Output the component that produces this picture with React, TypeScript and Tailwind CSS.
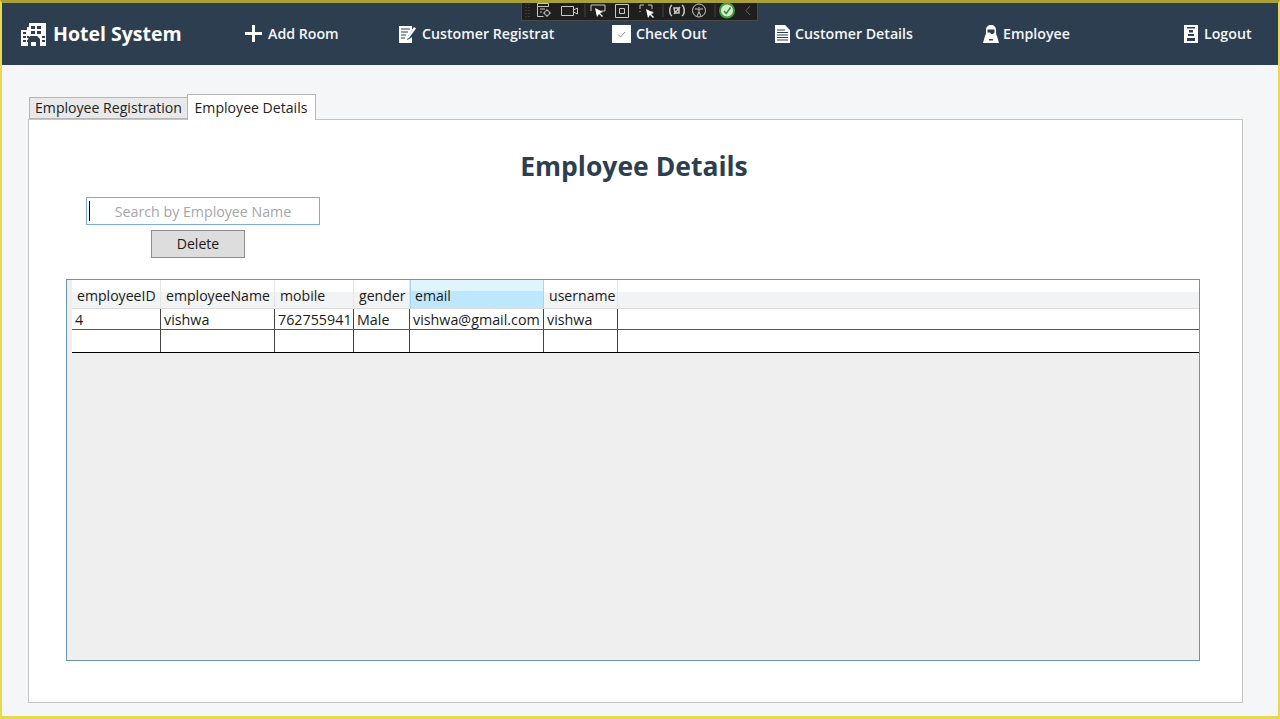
const columns = [
  { name: 'employeeID', value: '4', width: 'w-[89px]', pad: 'pl-[5px]' },
  { name: 'employeeName', value: 'vishwa', width: 'w-[114px]', pad: 'pl-[5px]' },
  { name: 'mobile', value: '762755941', width: 'w-[79px]', pad: 'pl-[5px]' },
  { name: 'gender', value: 'Male', width: 'w-[56px]', pad: 'pl-[5px]' },
  { name: 'email', value: 'vishwa@gmail.com', width: 'w-[134px]', pad: 'pl-[4px]' },
  { name: 'username', value: 'vishwa', width: 'w-[74px]', pad: 'pl-[5px]' },
];

function HotelIcon() {
  return (
    <svg width="25" height="23" viewBox="0 0 25 23" fill="#fff">
      <path d="M0 7h6V4h2V0h17v23H0z" />
      <g fill="#2d3e50">
        <path d="M2 9h3v2H2zM2 13h3v2H2zM2 17h3v2H2zM6 13h2v2H6zM6 17h2v2H6z" />
        <path d="M10 3h4v3h-4zM16 3h4v3h-4zM10 8h4v3h-4zM16 8h4v3h-4zM21 13h3v2h-3zM21 17h3v2h-3z" />
        <path d="M9 13h7l3 3v7H7v-7z" />
      </g>
      <path d="M10 19h5v4h-5z" fill="#fff" />
    </svg>
  );
}

function PlusIcon() {
  return (
    <svg width="17" height="17" viewBox="0 0 17 17" fill="#fff">
      <path d="M7 0h3v7h7v3h-7v7H7v-7H0V7h7z" />
    </svg>
  );
}

function FormIcon() {
  return (
    <svg width="17" height="18" viewBox="0 0 17 18">
      <path d="M0 1h13v4l-4 6-1 4 4-2 1-1v6H0z" fill="#fff" />
      <path d="M2 4h9M2 7h7M2 10h5M2 13h4" stroke="#2d3e50" strokeWidth="1.200" />
      <path d="M15 2l2 1.500L10 13l-2 1 .3-2.300z" fill="#fff" />
    </svg>
  );
}

function CheckIcon() {
  return (
    <svg width="19" height="18" viewBox="0 0 19 18">
      <path d="M0 0h19v18H0z" fill="#fff" />
      <path d="M6 9.500l2.500 2.500L13 7" fill="none" stroke="#8a8f96" strokeWidth="1" />
    </svg>
  );
}

function DocIcon() {
  return (
    <svg width="15" height="18" viewBox="0 0 15 18">
      <path d="M0 0h10l5 5v13H0z" fill="#fff" />
      <path d="M2 5h8M2 7.500h11M2 10h11M2 12.500h11M2 15h11" stroke="#2d3e50" strokeWidth="1" />
    </svg>
  );
}

function PersonIcon() {
  return (
    <svg width="16" height="18" viewBox="0 0 16 18">
      <path d="M8 0c3 0 5 2 5 5 0 3 0 5 1 6l2 7H0l2-7c1-1 1-3 1-6 0-3 2-5 5-5z" fill="#fff" />
      <path d="M4.500 4.500h7v3l-1.500 1.500h-2l-1-1.500h-2.500zM6 14h4v1.500H6z" fill="#2d3e50" />
    </svg>
  );
}

function DoorIcon() {
  return (
    <svg width="14" height="18" viewBox="0 0 14 18">
      <path d="M0 0h14v18H0z" fill="#fff" />
      <path d="M3 2h8v1.500H3zM5 5h4v2.500H5zM4 9h6v2H4zM3 13h8v3H3z" fill="#2d3e50" />
    </svg>
  );
}

function DebugToolbar() {
  return (
    <div className="absolute -top-[3px] left-[519px] z-10 flex h-[21px] w-[237px] items-center border border-[#4a4a4a] bg-[#1f1f1f]">
      <svg width="235" height="19" viewBox="0 0 235 19" fill="none" stroke="#c8c8c8" strokeWidth="1">
        <path d="M4 3v13M7 3v13" stroke="#555" strokeDasharray="1 2" />
        <path d="M15.500 2.500h11v3h-11zM15.500 5.500v10h6M18 8h5M18 11h2" />
        <circle cx="25" cy="12" r="2.500" />
        <path d="M25 8v1.500M25 14.500V16M21 12h1.500M27.500 12H29" />
        <path d="M39.500 5.500h12v9h-12zM51.500 9l4-2v6l-4-2" />
        <path d="M63 3v13" stroke="#444" />
        <path d="M69 10V4h14v6h-4" />
        <path d="M73 7l2 9 2-3 3 3 1-1-3-3 3-1z" fill="#fff" stroke="none" />
        <path d="M93.500 3.500h13v13h-13zM97.500 7.500h5v5h-5z" />
        <path d="M118 4h4M126 4h4M118 4v4M130 4v4M118 11v-1M130 11v-1" />
        <path d="M124 8l2 9 2-3 3 3 1-1-3-3 3-1z" fill="#fff" stroke="none" />
        <path d="M141 3v13" stroke="#444" />
        <path d="M150 4c-3 2-3 9 0 11M160 4c3 2 3 9 0 11M152 13l6-7M152 7h5v5h-4z" strokeWidth="1.500" />
        <circle cx="177" cy="9.500" r="6.500" />
        <path d="M177 6v1M173 8h8M177 8v3l-2 4M177 11l2 4" />
        <path d="M193 3v13" stroke="#444" />
        <circle cx="205" cy="9.500" r="7" fill="#d5ead0" stroke="#3f9e3a" strokeWidth="2" />
        <path d="M202 10l2.200 2.500L208.500 6.500" stroke="#2f8f2b" strokeWidth="1.500" />
        <path d="M228 5l-4 4.500 4 4.500" stroke="#666" />
      </svg>
    </div>
  );
}

function NavItem({ icon, label, className }: { icon: React.ReactNode; label: string; className: string }) {
  return (
    <div className={`flex items-center text-[14.200px] font-semibold text-[#f4f6f8] ${className}`}>
      {icon}
      <span className="pb-px">{label}</span>
    </div>
  );
}

export default function App() {
  return (
    <div className="relative flex h-[719px] w-[1280px] flex-col overflow-hidden border-x-2 border-t-[3px] border-b-[3px] border-x-[#e6d94e] border-t-[#a8a13a] border-b-[#e6d94e] bg-[#f4f6f8] font-['Open_Sans','Noto_Sans',sans-serif]">
      <DebugToolbar />
      <header className="flex h-[62px] shrink-0 items-center bg-[#2d3e50] pl-[19px]">
        <div className="flex w-[224px] items-center gap-[7px] text-[19.500px] font-bold text-white">
          <HotelIcon />
          <span>Hotel System</span>
        </div>
        <NavItem icon={<PlusIcon />} label="Add Room" className="w-[154px] gap-[6px]" />
        <NavItem icon={<FormIcon />} label="Customer Registrat" className="w-[213px] gap-[6px]" />
        <NavItem icon={<CheckIcon />} label="Check Out" className="w-[163px] gap-[5px]" />
        <NavItem icon={<DocIcon />} label="Customer Details" className="w-[208px] gap-[5px]" />
        <NavItem icon={<PersonIcon />} label="Employee" className="w-[201px] gap-[4px]" />
        <NavItem icon={<DoorIcon />} label="Logout" className="gap-[6px]" />
      </header>

      <main className="flex min-h-0 flex-1 flex-col pt-[29px] pr-[35px] pb-[13px] pl-[26px]">
        <div className="flex h-[25px] items-end pl-px text-[14.100px] text-[#222]">
          <div className="flex h-[22px] w-[158px] items-center justify-center border border-r-0 border-[#b5b5b5] bg-[#e9e9e9]">
            Employee Registration
          </div>
          <div className="z-10 -mb-px flex h-[26px] w-[129px] items-center justify-center border border-b-0 border-[#b5b5b5] bg-white pr-px">
            Employee Details
          </div>
        </div>

        <section className="flex min-h-0 flex-1 flex-col border border-[#c4c4c4] bg-white pt-[29px] pr-[42px] pb-[41px] pl-[37px]">
          <h1 className="h-[34px] pl-[2px] text-center text-[26.500px] leading-[34px] font-bold text-[#2d3e50]">
            Employee Details
          </h1>
          <div className="mt-[14px] ml-[20px] flex h-[28px] w-[234px] items-center border border-[#7fabd6] bg-white pl-[2px]">
            <span className="h-[20px] w-px bg-black" />
            <span className="w-full pr-[3px] pt-px text-center text-[14.200px] text-[#a6a6a6]">Search by Employee Name</span>
          </div>
          <button className="mt-[5px] ml-[85px] h-[28px] w-[94px] border border-[#8c8c8c] bg-[#dddddd] text-[14.100px] text-[#1a1a1a]">
            Delete
          </button>

          <div className="mt-[21px] flex min-h-0 flex-1 flex-col border border-[#6e93ad] bg-[#efefef] pl-[5px]">
            <div className="flex h-[28px] shrink-0 items-end bg-[linear-gradient(#ffffff_0,#ffffff_12px,#f2f3f5_12px,#f2f3f5_100%)]">
              {columns.map((c) => (
                <div
                  key={c.name}
                  className={`flex h-[28px] shrink-0 items-end pb-[3px] text-[14.100px] leading-[18px] text-[#1a1a1a] ${c.width} ${c.pad} ${
                    c.name === 'email'
                      ? 'border-x border-[#a4d6f0] bg-[linear-gradient(#e0f4fe_0,#e0f4fe_11px,#bde7fc_11px,#bde7fc_100%)]'
                      : 'border-r border-[#e4e6e8]'
                  }`}
                >
                  {c.name}
                </div>
              ))}
            </div>
            <div className="flex h-[22px] shrink-0 border-y border-t-[#dcdcdc] border-b-[#555] bg-white">
              {columns.map((c) => (
                <div
                  key={c.name}
                  className={`flex shrink-0 items-center border-r border-[#444] pt-[2px] pl-[3px] text-[14.300px] whitespace-nowrap text-[#1a1a1a] ${c.width}`}
                >
                  {c.value}
                </div>
              ))}
            </div>
            <div className="flex h-[23px] shrink-0 border-b border-black bg-white">
              {columns.map((c) => (
                <div key={c.name} className={`shrink-0 border-r border-[#444] ${c.width}`} />
              ))}
            </div>
          </div>
        </section>
      </main>
    </div>
  );
}
